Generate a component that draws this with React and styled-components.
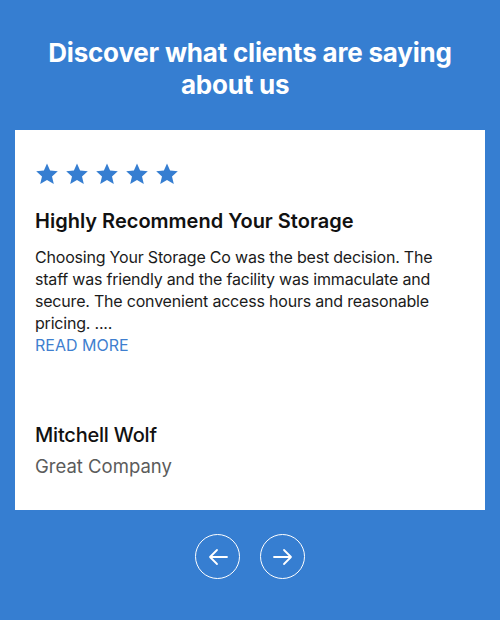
import React from "react";
import styled, { createGlobalStyle } from "styled-components";

const Global = createGlobalStyle`
  html, body {
    margin: 0;
    padding: 0;
    background: #367ed1;
  }
  * { box-sizing: border-box; }
`;

const Section_ = styled.section`
  width: 500px;
  height: 620px;
  background: #367ed1;
  padding: 37px 15px 0;
  font-family: Inter, "Liberation Sans", sans-serif;
  display: flex;
  flex-direction: column;
  align-items: center;
`;

const Title_ = styled.h2`
  margin: 0 0 29px;
  width: 420px;
  color: #fff;
  font-size: 26px;
  line-height: 32px;
  font-weight: 700;
  letter-spacing: -0.2px;
  text-align: center;
`;

const Card_ = styled.div`
  width: 470px;
  height: 380px;
  background: #fff;
  padding: 32px 20px 32px;
  display: flex;
  flex-direction: column;
`;

const Stars_ = styled.div`
  display: flex;
  gap: 6px;
  margin-bottom: 22px;
`;

const Heading_ = styled.h3`
  margin: 0 0 12px;
  font-size: 20px;
  line-height: 26px;
  font-weight: 600;
  color: #111;
  letter-spacing: 0;
`;

const Body_ = styled.p`
  margin: 0;
  font-size: 16px;
  line-height: 22px;
  color: #1b1b1b;
  letter-spacing: -0.2px;
`;

const ReadMore_ = styled.a`
  display: block;
  color: #3f7fcf;
  font-size: 16px;
  line-height: 22px;
  text-decoration: none;
`;

const Author_ = styled.div`
  margin-top: auto;
`;

const Name_ = styled.div`
  font-size: 20px;
  line-height: 28px;
  color: #111;
  font-weight: 500;
  letter-spacing: -0.2px;
`;

const Company_ = styled.div`
  margin-top: 5px;
  font-size: 18.5px;
  line-height: 24px;
  color: #5b5b5b;
`;

const Nav_ = styled.div`
  display: flex;
  gap: 20px;
  margin-top: 24px;
`;

const NavButton_ = styled.button`
  width: 45px;
  height: 45px;
  border-radius: 50%;
  border: 1.5px solid #fff;
  background: transparent;
  display: flex;
  align-items: center;
  justify-content: center;
  padding: 0;
  cursor: pointer;
`;

function Star() {
  return (
    <svg width="24" height="24" viewBox="0 0 24 24">
      <path
        d="M12 1.5l3.1 7.1 7.7.7-5.8 5.1 1.8 7.6L12 18l-6.8 4 1.8-7.6L1.2 9.3l7.7-.7z"
        fill="#367ed1"
      />
    </svg>
  );
}

function Arrow({ dir }) {
  return (
    <svg width="22" height="22" viewBox="0 0 22 22" fill="none" stroke="#fff" strokeWidth="1.8" strokeLinecap="round" strokeLinejoin="round">
      {dir === "left" ? (
        <path d="M20 11H3M10 4l-7 7 7 7" />
      ) : (
        <path d="M2 11h17M12 4l7 7-7 7" />
      )}
    </svg>
  );
}

export default function App() {
  return (
    <>
      <Global />
      <Section_>
        <Title_>Discover what clients are saying about us&nbsp;&nbsp;&nbsp;&nbsp;&nbsp;</Title_>
        <Card_>
          <Stars_>
            {[0, 1, 2, 3, 4].map((i) => (
              <Star key={i} />
            ))}
          </Stars_>
          <Heading_>Highly Recommend Your Storage</Heading_>
          <Body_>
            Choosing Your Storage Co was the best decision. The staff was friendly and the facility was
            immaculate and secure. The convenient access hours and reasonable pricing. ....
          </Body_>
          <ReadMore_ href="#">READ MORE</ReadMore_>
          <Author_>
            <Name_>Mitchell Wolf</Name_>
            <Company_>Great Company</Company_>
          </Author_>
        </Card_>
        <Nav_>
          <NavButton_ aria-label="Previous">
            <Arrow dir="left" />
          </NavButton_>
          <NavButton_ aria-label="Next">
            <Arrow dir="right" />
          </NavButton_>
        </Nav_>
      </Section_>
    </>
  );
}
